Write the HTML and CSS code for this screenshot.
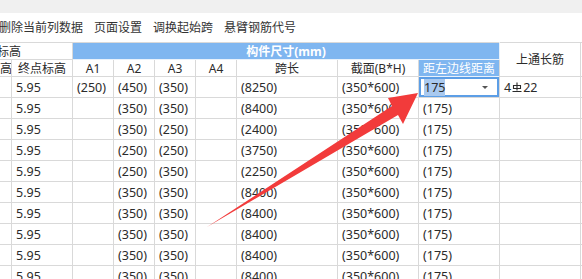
FILE: index.html
```html
<!DOCTYPE html>
<html lang="zh-CN">

<head>
    <meta charset="UTF-8">
    <meta name="viewport" content="width=device-width, initial-scale=1.0">
    <title>梁平法表格</title>
    <link rel="stylesheet" href="styles.css">
</head>

<body>
    <div class="topbar"></div>

    <div class="toolbar">
        <span class="tool first">删除当前列数据</span>
        <span class="tool">页面设置</span>
        <span class="tool">调换起始跨</span>
        <span class="tool">悬臂钢筋代号</span>
    </div>

    <div class="sheet">
        <table class="grid">
            <colgroup>
                <col class="w-c0">
                <col class="w-c1">
                <col class="w-a">
                <col class="w-a">
                <col class="w-a">
                <col class="w-a">
                <col class="w-span">
                <col class="w-sec">
                <col class="w-dist">
                <col class="w-top">
                <col class="w-rest">
            </colgroup>
            <thead>
                <tr class="head1">
                    <th colspan="2" class="left"><span class="cut">标高</span></th>
                    <th colspan="7" class="blue bold">构件尺寸(mm)</th>
                    <th rowspan="2">上通长筋</th>
                    <th rowspan="2"></th>
                </tr>
                <tr class="head2">
                    <th class="right">高</th>
                    <th>终点标高</th>
                    <th>A1</th>
                    <th>A2</th>
                    <th>A3</th>
                    <th>A4</th>
                    <th>跨长</th>
                    <th>截面(B*H)</th>
                    <th class="blue">距左边线距离</th>
                </tr>
            </thead>
            <tbody>
                <tr>
                    <td></td><td>5.95</td><td>(250)</td><td>(450)</td><td>(350)</td><td></td>
                    <td>(8250)</td><td>(350*600)</td>
                    <td class="sel"><span class="picked">175</span><span class="drop"></span><span class="handle"></span></td>
                    <td>4<svg class="rebar" width="10" height="11" viewBox="0 0 10 11"><path d="M1.5 3.5h7v3h-7z M5 0.5v8 M0.5 9.5h9" fill="none" stroke="#2b2b2b" stroke-width="1.1"/></svg>22</td>
                    <td></td>
                </tr>
                <tr>
                    <td></td><td>5.95</td><td></td><td>(350)</td><td>(350)</td><td></td>
                    <td>(8400)</td><td>(350*600)</td><td>(175)</td><td></td><td></td>
                </tr>
                <tr>
                    <td></td><td>5.95</td><td></td><td>(350)</td><td>(250)</td><td></td>
                    <td>(2400)</td><td>(350*600)</td><td>(175)</td><td></td><td></td>
                </tr>
                <tr>
                    <td></td><td>5.95</td><td></td><td>(250)</td><td>(250)</td><td></td>
                    <td>(3750)</td><td>(350*600)</td><td>(175)</td><td></td><td></td>
                </tr>
                <tr>
                    <td></td><td>5.95</td><td></td><td>(250)</td><td>(350)</td><td></td>
                    <td>(2250)</td><td>(350*600)</td><td>(175)</td><td></td><td></td>
                </tr>
                <tr>
                    <td></td><td>5.95</td><td></td><td>(350)</td><td>(350)</td><td></td>
                    <td>(8400)</td><td>(350*600)</td><td>(175)</td><td></td><td></td>
                </tr>
                <tr>
                    <td></td><td>5.95</td><td></td><td>(350)</td><td>(350)</td><td></td>
                    <td>(8400)</td><td>(350*600)</td><td>(175)</td><td></td><td></td>
                </tr>
                <tr>
                    <td></td><td>5.95</td><td></td><td>(350)</td><td>(350)</td><td></td>
                    <td>(8400)</td><td>(350*600)</td><td>(175)</td><td></td><td></td>
                </tr>
                <tr>
                    <td></td><td>5.95</td><td></td><td>(350)</td><td>(350)</td><td></td>
                    <td>(8400)</td><td>(350*600)</td><td>(175)</td><td></td><td></td>
                </tr>
                <tr>
                    <td></td><td>5.95</td><td></td><td>(350)</td><td>(350)</td><td></td>
                    <td>(8400)</td><td>(350*600)</td><td>(175)</td><td></td><td></td>
                </tr>
            </tbody>
        </table>

        <!-- annotation arrow drawn over the sheet -->
        <svg class="arrow" width="582" height="237" viewBox="0 42 582 237">
            <polygon points="207,227 392,106 388,98 418,93 403,124 398,115" fill="#f23b3b"/>
        </svg>
    </div>
</body>

</html>
```

FILE: styles.css
```css
* {
    box-sizing: border-box;
}

body {
    margin: 0;
    width: 582px;
    height: 279px;
    overflow: hidden;
    background-color: #ffffff;
    color: #2b2b2b;
    font-family: "Noto Sans", "Noto Sans CJK SC", sans-serif;
    font-size: 12px;
}

.topbar {
    height: 13px;
    background-color: #f0f0f0;
}

.toolbar {
    height: 29px;
    display: flex;
    align-items: center;
    gap: 11px;
    padding-bottom: 1px;
    color: #333;
    font-size: 12px;
    white-space: nowrap;
}

.tool.first {
    margin-left: -1px;
}

.sheet {
    position: relative;
    overflow: hidden;
    height: 237px;
}

.grid {
    border-collapse: collapse;
    table-layout: fixed;
    width: 640px;
    margin-left: -1px;
}

.w-c0 { width: 12px; }
.w-c1 { width: 61px; }
.w-a { width: 41px; }
.w-span { width: 101px; }
.w-sec { width: 81px; }
.w-dist { width: 81px; }
.w-top { width: 81px; }
.w-rest { width: 60px; }

.grid th,
.grid td {
    border: 1px solid #d9d9d9;
    padding: 0 0 0 4px;
    white-space: nowrap;
    overflow: hidden;
    text-align: left;
}

.grid th {
    font-weight: normal;
    font-size: 12px;
    text-align: center;
    padding: 0;
    line-height: 15px;
}

.head1 th,
.head2 th {
    height: 17px;
}

.grid th.left {
    text-align: left;
}

.grid th.right {
    text-align: right;
    padding-right: 1px;
}

.cut {
    margin-left: -3px;
}

.grid th.blue {
    background-color: #7fb6f0;
    color: #ffffff;
    border-color: #e8f1fb;
}

.head1 th.blue {
    border-left-color: #d9d9d9;
    border-top-color: #d9d9d9;
}

.grid th.bold {
    font-weight: bold;
}

.grid td {
    height: 21px;
    font-size: 12.5px;
    line-height: 19px;
}

.grid td.sel {
    position: relative;
    box-shadow: inset 0 0 0 2px #5c9ee6;
    padding-left: 5px;
}

.picked {
    background-color: #a9c9ef;
}

.drop {
    position: absolute;
    right: 11px;
    top: 9px;
    width: 0;
    height: 0;
    border-left: 3px solid transparent;
    border-right: 3px solid transparent;
    border-top: 3px solid #555;
}

.handle {
    position: absolute;
    right: -2px;
    bottom: -2px;
    width: 4px;
    height: 4px;
    background-color: #5c9ee6;
}

.rebar {
    vertical-align: -1px;
    margin: 0 1px;
}

.arrow {
    position: absolute;
    left: 0;
    top: 0;
    pointer-events: none;
}
```
